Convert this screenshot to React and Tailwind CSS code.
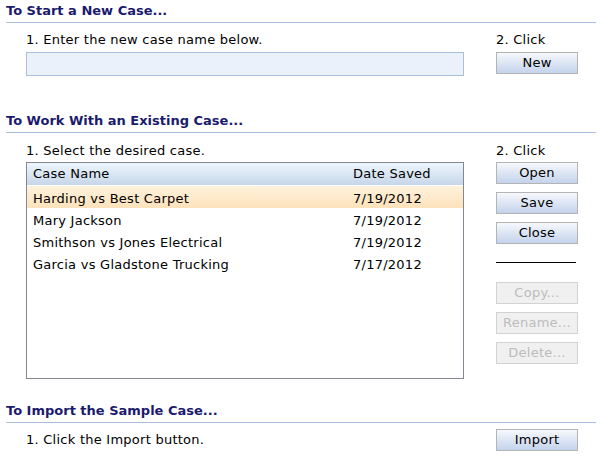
const cases = [
  { name: "Harding vs Best Carpet", date: "7/19/2012", selected: true },
  { name: "Mary Jackson", date: "7/19/2012" },
  { name: "Smithson vs Jones Electrical", date: "7/19/2012" },
  { name: "Garcia vs Gladstone Trucking", date: "7/17/2012" },
];

const SectionHeader = ({ children, className = "" }) => (
  <div className={`ml-[6px] w-[590px] border-b border-[#a9bedf] pt-[3px] pb-[3px] text-[13px] font-bold leading-[16px] text-[#1b1b6e] ${className}`}>
    {children}
  </div>
);

const Button = ({ label, disabled, className = "" }) => (
  <button
    type="button"
    disabled={disabled}
    className={`flex h-[22px] w-[82px] items-center justify-center border text-[13px] leading-[16px] tracking-[0.25px] ${
      disabled
        ? "border-[#d2d2d2] bg-[#f0f0f0] text-[#bcbcbc]"
        : "border-[#b4b4b4] bg-gradient-to-b from-[#f6f8fc] to-[#c4d3ec] text-black"
    } ${className}`}
  >
    {label}
  </button>
);

export default function App() {
  return (
    <div className="h-[457px] w-[602px] bg-white font-['Verdana','DejaVu_Sans',sans-serif] text-black">
      {/* new case */}
      <SectionHeader>To Start a New Case...</SectionHeader>
      <div className="flex">
        <div className="ml-[26px] w-[438px]">
          <p className="mt-[9px] text-[13px] leading-[16px] tracking-[0.25px]">1. Enter the new case name below.</p>
          <input
            type="text"
            className="mt-[4px] block h-[24px] w-[438px] border border-[#a9c0dc] bg-[#eaf1fb] outline-none"
          />
        </div>
        <div className="ml-[32px] w-[82px]">
          <p className="mt-[9px] text-[13px] leading-[16px] tracking-[0.25px]">2. Click</p>
          <Button label="New" className="mt-[4px]" />
        </div>
      </div>

      {/* existing case */}
      <SectionHeader className="mt-[34px]">To Work With an Existing Case...</SectionHeader>
      <div className="flex">
        <div className="ml-[26px] w-[438px]">
          <p className="mt-[10px] text-[13px] leading-[16px] tracking-[0.25px]">1. Select the desired case.</p>
          <div className="mt-[3px] h-[217px] w-[438px] border border-[#838790] bg-white text-[13px] leading-[16px] tracking-[0.25px]">
            <div className="flex h-[22px] items-center bg-gradient-to-b from-[#eef6fc] to-[#c6d6e9]">
              <span className="w-[326px] pl-[6px]">Case Name</span>
              <span>Date Saved</span>
            </div>
            {cases.map((c) => (
              <div
                key={c.name}
                className={`flex h-[22px] items-center pt-[4px] ${
                  c.selected ? "mt-px bg-gradient-to-b from-[#fef2dc] to-[#fde2bb]" : ""
                }`}
              >
                <span className="w-[326px] pl-[6px]">{c.name}</span>
                <span>{c.date}</span>
              </div>
            ))}
          </div>
        </div>
        <div className="ml-[32px] w-[82px]">
          <p className="mt-[10px] text-[13px] leading-[16px] tracking-[0.25px]">2. Click</p>
          <div className="mt-[3px] flex flex-col gap-[8px]">
            <Button label="Open" />
            <Button label="Save" />
            <Button label="Close" />
          </div>
          <div className="mt-[18px] h-px w-[80px] bg-black" />
          <div className="mt-[19px] flex flex-col gap-[8px]">
            <Button label="Copy..." disabled />
            <Button label="Rename..." disabled />
            <Button label="Delete..." disabled />
          </div>
        </div>
      </div>

      {/* import */}
      <SectionHeader className="mt-[21px]">To Import the Sample Case...</SectionHeader>
      <div className="mt-[6px] flex items-center">
        <p className="ml-[26px] w-[470px] text-[13px] leading-[16px] tracking-[0.25px]">1. Click the Import button.</p>
        <Button label="Import" />
      </div>
    </div>
  );
}
